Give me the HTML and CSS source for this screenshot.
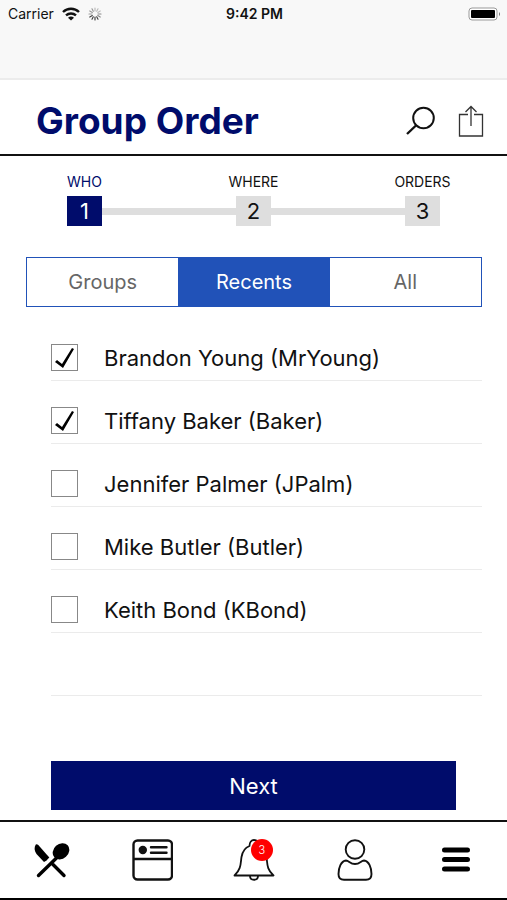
FILE: index.html
```html
<!DOCTYPE html>
<html lang="en">
<head>
    <meta charset="UTF-8">
    <meta name="viewport" content="width=device-width, initial-scale=1.0">
    <title>Group Order</title>
    <link rel="stylesheet" href="styles.css">
</head>
<body>
    <!-- Status bar -->
    <div class="status">
        <div class="status-left">
            <span>Carrier</span>
            <svg class="wifi" width="18" height="14" viewBox="0 0 18 14" fill="none" stroke="#111" stroke-width="2.4">
                <path d="M1 5a11.500 11.500 0 0 1 16 0"/>
                <path d="M4 8.400a7.500 7.500 0 0 1 10 0"/>
                <path d="M6 10.800a4.600 4.600 0 0 1 6 0L9 13.600z" fill="#111" stroke="none"/>
            </svg>
            <svg class="spinner" width="14" height="14" viewBox="0 0 14 14" stroke-width="1.200" stroke-linecap="round">
                <path d="M7 1v3M10 1.800L8.700 4.300M12.200 4L9.800 5.400" stroke="#bbb"/>
                <path d="M1.800 4l2.500 1.400M4 1.800l1.300 2.500M1 7h3" stroke="#999"/>
                <path d="M13 7h-3M12.200 10L9.800 8.600" stroke="#888"/>
                <path d="M10 12.200L8.700 9.800M7 13v-3M4 12.200l1.300-2.400M1.800 10l2.500-1.400" stroke="#444"/>
            </svg>
        </div>
        <span class="status-time">9:42 PM</span>
        <div class="status-right">
            <svg width="33" height="14" viewBox="0 0 33 14">
                <rect x="1" y="1" width="28" height="12" rx="3" fill="#fff" stroke="#999"/>
                <rect x="3" y="3" width="24" height="8" rx="1" fill="#000"/>
                <path d="M31 5v4a2.500 2.500 0 0 0 0-4z" fill="#777"/>
            </svg>
        </div>
    </div>

    <header class="header">
        <h1>Group Order</h1>
        <button type="button" class="icon-button" aria-label="Search">
            <svg width="30" height="30" viewBox="0 0 30 30" fill="none" stroke="#111" stroke-width="2">
                <circle cx="17.500" cy="12" r="10.300"/>
                <path d="M10.500 19l-9.500 9" stroke-width="2.400"/>
            </svg>
        </button>
        <button type="button" class="icon-button" aria-label="Share">
            <svg width="26" height="32" viewBox="0 0 26 32" fill="none" stroke="#333" stroke-width="1.300">
                <path d="M10 9.500H1.500V31h23V9.500H16"/>
                <path d="M13 21V1.500M7.500 7L13 1.500L18.500 7"/>
            </svg>
        </button>
    </header>

    <main class="main">
        <!-- Order steps -->
        <ol class="steps">
            <li class="step active"><span>WHO</span><div class="step-line"><b>1</b></div></li>
            <li class="step"><span>WHERE</span><div class="step-line"><b>2</b></div></li>
            <li class="step"><span>ORDERS</span><div class="step-line"><b>3</b></div></li>
        </ol>

        <div class="tabs">
            <button type="button" class="tab">Groups</button>
            <button type="button" class="tab selected">Recents</button>
            <button type="button" class="tab">All</button>
        </div>

        <!-- People list -->
        <ul class="people">
            <li><input type="checkbox" id="brandon" checked><label for="brandon">Brandon Young (MrYoung)</label></li>
            <li><input type="checkbox" id="tiffany" checked><label for="tiffany">Tiffany Baker (Baker)</label></li>
            <li><input type="checkbox" id="jennifer"><label for="jennifer">Jennifer Palmer (JPalm)</label></li>
            <li><input type="checkbox" id="mike"><label for="mike">Mike Butler (Butler)</label></li>
            <li><input type="checkbox" id="keith"><label for="keith">Keith Bond (KBond)</label></li>
            <li></li>
        </ul>

        <button type="button" class="next">Next</button>
    </main>

    <nav class="nav">
        <a href="#" aria-label="Food">
            <svg width="42" height="42" viewBox="0 0 42 42">
                <path d="M8.500 36.500L27 18.500M34 36.500L23 25.500" stroke="#000" stroke-width="3.400" stroke-linecap="round"/>
                <path d="M5.800 5.600C4 8.500 4.200 12 6.500 15L14 23L16.500 21.500L19.300 18.500L8.300 6Q6.800 4.600 5.800 5.600z" fill="#000"/>
                <ellipse cx="31" cy="12.300" rx="7.400" ry="9" transform="rotate(48 31 12.300)" fill="#000"/>
            </svg>
        </a>
        <a href="#" aria-label="Menu card">
            <svg width="42" height="42" viewBox="0 0 42 42" fill="none" stroke="#111" stroke-width="2.400">
                <rect x="2.500" y="1.500" width="38.500" height="39" rx="4"/>
                <path d="M2.500 20h38.500"/>
                <circle cx="11.800" cy="11" r="4.200" fill="#111" stroke="none"/>
                <path d="M20 8.300h15.500M20 13.800h15.500" stroke-linecap="round"/>
            </svg>
        </a>
        <a href="#" class="alerts" aria-label="Alerts">
            <svg width="42" height="42" viewBox="0 0 42 42" fill="none" stroke="#111" stroke-width="1.800" stroke-linejoin="round">
                <path d="M1.500 36.500C8.500 30 7.500 24 8.500 18C9.500 12 12.500 8.500 16.500 7C16.500 3 18.500 1 21 1S25.500 3 25.500 7C30 8.500 32.500 12 33.500 18C34.500 25 33.500 30 40.500 36.500z"/>
                <path d="M17 37c0 5 8 5 8 0"/>
            </svg>
            <span class="badge">3</span>
        </a>
        <a href="#" aria-label="Profile">
            <svg width="42" height="42" viewBox="0 0 42 42" fill="none" stroke="#111" stroke-width="1.900">
                <circle cx="21" cy="10.500" r="9.300"/>
                <path d="M12 21.500C15 21.500 16 25 21 25S27 21.500 30 21.500C35 22 37.500 29 37.500 35C37.500 39 35.500 40.800 32 40.800H10C6.500 40.800 4.500 39 4.500 35C4.500 29 7 22 12 21.500z"/>
            </svg>
        </a>
        <a href="#" aria-label="More">
            <svg width="42" height="42" viewBox="0 0 42 42" stroke="#000" stroke-width="5" stroke-linecap="round">
                <path d="M9.500 11h23M9.500 20.500h23M9.500 30h23"/>
            </svg>
        </a>
    </nav>
</body>
</html>
```
FILE: styles.css
```css
* {
    box-sizing: border-box;
}
body {
    margin: 0;
    min-height: 100vh;
    display: flex;
    flex-direction: column;
    background-color: #fff;
    color: #111;
    font-family: Inter, Arial, sans-serif;
    font-size: 22px;
}
button {
    font-family: inherit;
    cursor: pointer;
}
svg {
    display: block;
}

/* Status bar */
.status {
    display: flex;
    height: 80px;
    padding: 4px 6px 0 8px;
    background-color: #f8f8f8;
    border-bottom: 2px solid #ececec;
    font-size: 14px;
    line-height: 20px;
}
.status-left,
.status-right {
    flex: 1;
    display: flex;
    align-items: center;
    height: 20px;
}
.status-left {
    gap: 8px;
}
.status-right {
    justify-content: flex-end;
}
.status-time {
    font-weight: 600;
}

/* Header */
.header {
    display: flex;
    align-items: center;
    gap: 22px;
    height: 76px;
    padding: 8px 23px 0 36px;
    border-bottom: 2px solid #111;
}
.header h1 {
    flex: 1;
    margin: 0;
    color: #000c6b;
    font-size: 37px;
    line-height: 44px;
}
.icon-button {
    padding: 0;
    border: none;
    background: none;
}

/* Steps */
.steps {
    display: flex;
    margin: 0;
    padding: 16px 0 0;
    list-style: none;
}
.step {
    flex: 1;
    font-size: 14px;
    line-height: 20px;
    text-align: center;
}
.step span {
    display: block;
}
.step-line {
    display: flex;
    align-items: center;
    margin-top: 4px;
}
.step-line::before,
.step-line::after {
    content: "";
    flex: 1;
    height: 7px;
    background-color: #dedede;
}
.step:first-child .step-line::before,
.step:last-child .step-line::after {
    background: none;
}
.step b {
    width: 35px;
    background-color: #dedede;
    font-size: 22px;
    font-weight: 400;
    line-height: 30px;
}
.step.active {
    color: #000c6b;
}
.step.active b {
    background-color: #000c6b;
    color: #fff;
}

/* Tabs */
.tabs {
    display: flex;
    margin: 31px 25px 0 26px;
    border: 1px solid #2152b8;
}
.tab {
    flex: 1;
    height: 48px;
    padding: 0;
    border: none;
    background-color: #fff;
    color: #666;
    font-size: 20px;
}
.tab.selected {
    background-color: #2152b8;
    color: #fff;
}

/* People list */
.people {
    margin: 11px 25px 0 51px;
    padding: 0;
    list-style: none;
}
.people li {
    display: flex;
    align-items: center;
    gap: 26px;
    height: 63px;
    padding-top: 17px;
    border-bottom: 1px solid #ebebeb;
}
.people input {
    appearance: none;
    width: 27px;
    height: 27px;
    margin: 0;
    border: 1px solid #888;
}
.people input:checked::before {
    content: "";
    display: block;
    height: 25px;
    background-color: #000;
    clip-path: polygon(3px 17px, 5px 15px, 10px 19px, 20px 3px, 22px 4px, 11px 23px);
}

.next {
    display: block;
    width: calc(100% - 102px);
    height: 49px;
    margin: 65px 51px 10px;
    border: none;
    background-color: #000c6b;
    color: #fff;
    font-size: 22px;
}

/* Bottom navigation */
.nav {
    display: flex;
    height: 80px;
    margin-top: auto;
    border-top: 2px solid #111;
    border-bottom: 2px solid #000;
}
.nav a {
    flex: 1;
    display: flex;
    align-items: center;
    justify-content: center;
    text-decoration: none;
}
.alerts {
    position: relative;
}
.badge {
    position: absolute;
    top: 17px;
    left: 48px;
    width: 22px;
    border-radius: 50%;
    background-color: #f00;
    color: #fff;
    font-size: 11px;
    font-weight: 300;
    line-height: 22px;
    text-align: center;
}
```
